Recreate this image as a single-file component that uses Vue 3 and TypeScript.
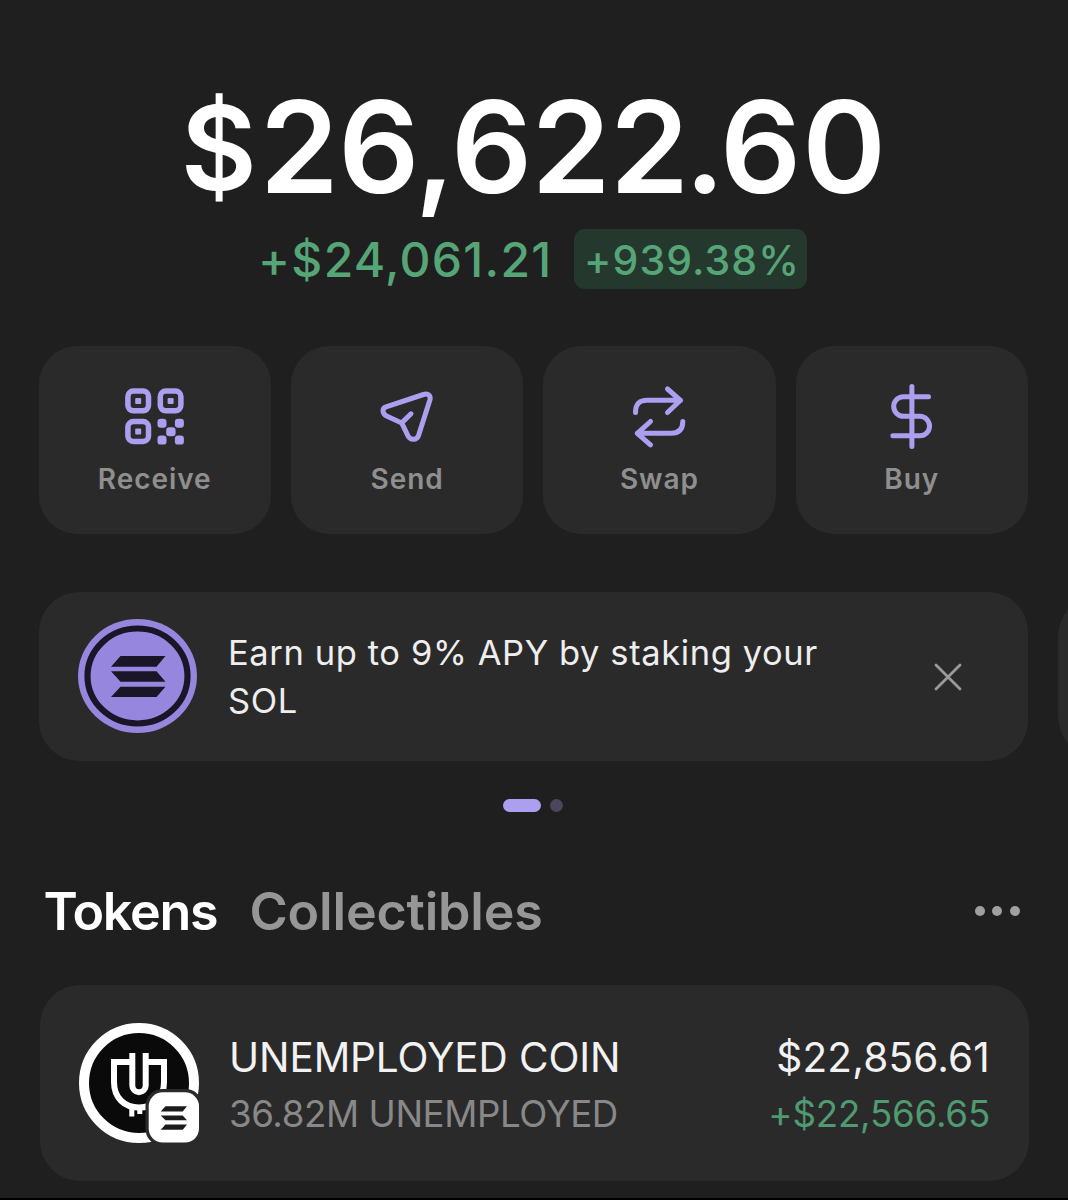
<script setup lang="ts">
type ActionIcon = 'receive' | 'send' | 'swap' | 'buy'

interface Action {
  id: ActionIcon
  label: string
}

interface Token {
  name: string
  amount: string
  value: string
  change: string
}

const balance = { currency: '$', whole: '26,622', tenths: '.6', hundredths: '0' }
const change = '+$24,061.21'
const changePercent = '+939.38%'

const actions: Action[] = [
  { id: 'receive', label: 'Receive' },
  { id: 'send', label: 'Send' },
  { id: 'swap', label: 'Swap' },
  { id: 'buy', label: 'Buy' },
]

const tokens: Token[] = [
  { name: 'UNEMPLOYED COIN', amount: '36.82M UNEMPLOYED', value: '$22,856.61', change: '+$22,566.65' },
]
</script>

<template>
  <main class="wallet">
    <header class="summary">
      <h1 class="balance"><span class="currency">{{ balance.currency }}</span><span>{{ balance.whole }}</span><span class="tenths">{{ balance.tenths }}</span><span>{{ balance.hundredths }}</span></h1>
      <div class="delta">
        <span class="delta-amount">{{ change }}</span>
        <span class="delta-percent">{{ changePercent }}</span>
      </div>
    </header>

    <nav class="actions">
      <button v-for="action in actions" :key="action.id" class="action" type="button">
        <svg v-if="action.id === 'receive'" class="action-icon" viewBox="0 0 64 66">
          <g class="line qr">
            <rect x="4.9" y="7" width="20.6" height="19.8" rx="5.5" />
            <rect x="37.3" y="7" width="20.6" height="19.8" rx="5.5" />
            <rect x="4.9" y="37.6" width="20.6" height="19.8" rx="5.5" />
          </g>
          <g class="solid">
            <rect x="12.2" y="14" width="6" height="6" rx="1" />
            <rect x="44.6" y="14" width="6" height="6" rx="1" />
            <rect x="12.2" y="44.6" width="6" height="6" rx="1" />
            <rect x="34.5" y="34.8" width="9" height="9" rx="3.2" />
            <rect x="51.9" y="34.8" width="9" height="9" rx="3.2" />
            <rect x="43.2" y="43.2" width="9.4" height="9" rx="3.2" />
            <rect x="34.5" y="51.6" width="9" height="9" rx="3.2" />
            <rect x="51.9" y="51.6" width="9" height="9" rx="3.2" />
          </g>
        </svg>
        <svg v-else-if="action.id === 'send'" class="action-icon" viewBox="0 0 64 66">
          <path
            class="line"
            d="M11 22.8 L48.5 10.5 C53.3 9 56.2 11.5 54.8 16.3 L43.6 51.3 C41.8 56.3 35.4 56.6 33 51.8 L26.7 38.9 L11.6 32 C7 29.7 6.8 24.3 11 22.8 Z M26.7 38.9 L36 29.8"
          />
        </svg>
        <svg v-else-if="action.id === 'swap'" class="action-icon" viewBox="0 0 64 66">
          <path
            class="line"
            d="M8.5 28.5 C8.5 20 12.3 16.3 20.3 16.3 H53.5 M40.5 5 L53.5 16.3 L40.5 28.5 M55.8 37.5 C55.8 45.5 52 49.3 44 49.3 H10.3 M23.5 37.5 L10.3 49.3 L23.5 60.8"
          />
        </svg>
        <svg v-else class="action-icon" viewBox="0 0 64 66">
          <path
            class="line"
            d="M31.9 2.5 V62.5 M48.5 12.7 H23.5 A9.8 9.8 0 0 0 23.5 32.3 H39.8 A9.75 9.75 0 0 1 39.8 51.8 H12.9"
          />
        </svg>
        <span class="action-label">{{ action.label }}</span>
      </button>
    </nav>

    <section class="carousel">
      <article class="banner">
        <svg class="banner-logo" viewBox="0 0 120 116">
          <ellipse cx="60.5" cy="58" rx="59.5" ry="57" fill="#9786dd" />
          <ellipse cx="60.5" cy="58" rx="50" ry="47.5" fill="none" stroke="#1a1627" stroke-width="6.2" />
          <path
            fill="#1a1627"
            d="M43.5 38 H88.5 L79.5 48.7 H34 Z M34 53.3 H79.5 L88.5 63.7 H43.5 Z M43.5 68.7 H88.5 L79.5 79 H34 Z"
          />
        </svg>
        <p class="banner-text">Earn up to 9% APY by staking your<br />SOL</p>
        <svg class="close" viewBox="0 0 28 28">
          <path d="M2 2 L26 26 M26 2 L2 26" />
        </svg>
      </article>
      <article class="banner-next"></article>
    </section>

    <div class="pager">
      <span class="page current"></span>
      <span class="page"></span>
    </div>

    <div class="tabs">
      <h2 class="tab tab-tokens">Tokens</h2>
      <h2 class="tab tab-collectibles">Collectibles</h2>
      <div class="more"><i></i><i></i><i></i></div>
    </div>

    <article v-for="token in tokens" :key="token.name" class="token">
      <svg class="token-logo" viewBox="0 0 122 122">
        <circle cx="61" cy="60" r="55" fill="#0a0a0a" stroke="#fff" stroke-width="10" />
        <g fill="none" stroke="#fff" stroke-width="6">
          <path d="M53 39 H36 V59 C36 75 46.5 84.5 61 84.5 C75.5 84.5 86 75 86 59 V39 H69" />
          <path d="M54.3 30 V62.5 A6.7 6.7 0 0 0 67.7 62.5 V30" />
          <path d="M53.8 84 V93.5 M61.8 84 V91" stroke-width="5" />
        </g>
        <rect x="67.5" y="66" width="57" height="57" rx="17" fill="#2a2a2a" />
        <rect x="70.7" y="69.3" width="50.3" height="50.2" rx="14" fill="#fff" />
        <path
          fill="#1c1c1c"
          d="M87.5 83.2 H109 L104.7 88.5 H82.7 Z M82.7 92.4 H104.7 L109 97.3 H87.5 Z M87.5 101.6 H109 L104.7 106.8 H82.7 Z"
        />
      </svg>
      <div class="token-info">
        <div class="token-name">{{ token.name }}</div>
        <div class="token-amount">{{ token.amount }}</div>
      </div>
      <div class="token-worth">
        <div class="token-value">{{ token.value }}</div>
        <div class="token-change">{{ token.change }}</div>
      </div>
    </article>
  </main>
</template>

<style>
body {
  margin: 0;
  background: #1f1f1f;
}
</style>

<style scoped>
.wallet {
  box-sizing: border-box;
  width: 1068px;
  height: 1200px;
  overflow: hidden;
  padding-top: 77px;
  border-bottom: 2px solid #000;
  background: #1f1f1f;
  font-family: Inter, "Liberation Sans", sans-serif;
  color: #fff;
}

.summary {
  display: flex;
  flex-direction: column;
  align-items: center;
}

.balance {
  display: flex;
  margin: 0 2px 0 0;
  font-size: 127px;
  font-weight: 600;
  line-height: 141px;
  letter-spacing: -0.7px;
}

.currency {
  width: 79px;
  font-size: 117px;
}

.tenths {
  margin: 0 2.5px 0 -4px;
  letter-spacing: -1.5px;
}

.delta {
  display: flex;
  align-items: center;
  gap: 21.5px;
  height: 60px;
  margin: 11px 3px 0 0;
  color: #56a577;
  font-weight: 500;
}

.delta-amount {
  padding-top: 1px;
  font-size: 48px;
  line-height: 60px;
  letter-spacing: 1.3px;
}

.delta-percent {
  box-sizing: border-box;
  width: 233px;
  height: 60px;
  padding: 1px 0 0 10px;
  border-radius: 11px;
  background: #24382d;
  font-size: 41px;
  line-height: 60px;
  letter-spacing: 1.1px;
}

.actions {
  display: flex;
  gap: 20px;
  margin: 57px 40px 0 38.5px;
}

.action {
  display: flex;
  flex: 1;
  flex-direction: column;
  align-items: center;
  height: 188px;
  padding: 38px 0 0;
  border: 0;
  border-radius: 38px;
  background: #2a2a2a;
  font-family: inherit;
}

.action-icon {
  width: 64px;
  height: 66px;
}

.line {
  fill: none;
  stroke: #ad9ff0;
  stroke-width: 5px;
  stroke-linecap: round;
  stroke-linejoin: round;
}

.line.qr {
  stroke-width: 5.5px;
}

.solid {
  fill: #ad9ff0;
}

.action-label {
  margin-top: 9.5px;
  color: #8f8f8f;
  font-size: 28px;
  font-weight: 600;
  line-height: 38px;
  letter-spacing: 0.95px;
}

.carousel {
  display: flex;
  gap: 30px;
  margin: 58px 0 0 38.5px;
}

.banner {
  display: flex;
  flex: none;
  align-items: center;
  width: 989.5px;
  height: 169px;
  border-radius: 40px;
  background: #2a2a2a;
}

.banner-logo {
  width: 120px;
  height: 116px;
  margin: -1px 0 0 38.5px;
}

.banner-text {
  flex: 1;
  margin: 0 0 0 31px;
  color: #eee;
  font-size: 34.5px;
  line-height: 48px;
  letter-spacing: 0.6px;
}

.close {
  width: 28px;
  height: 28px;
  margin-right: 66px;
  fill: none;
  stroke: #9a9a9a;
  stroke-width: 2.8px;
  stroke-linecap: round;
}

.banner-next {
  flex: none;
  width: 989px;
  height: 169px;
  border-radius: 46px;
  background: #2a2a2a;
}

.pager {
  display: flex;
  justify-content: center;
  gap: 9px;
  margin: 38px 3px 0 0;
}

.page {
  width: 13px;
  height: 12.5px;
  border-radius: 7px;
  background: #4b465d;
}

.page.current {
  width: 38px;
  background: #ad9ff0;
}

.tabs {
  display: flex;
  align-items: center;
  height: 64px;
  margin: 68.5px 48.5px 0 43.5px;
}

.tab {
  margin: 0;
  font-size: 52px;
  font-weight: 600;
  line-height: 64px;
}

.tab-tokens {
  width: 206px;
  letter-spacing: -1.29px;
}

.tab-collectibles {
  color: #969696;
  letter-spacing: -0.2px;
}

.more {
  display: flex;
  gap: 7.5px;
  margin: -2px 0 0 auto;
}

.more i {
  width: 10px;
  height: 10px;
  border-radius: 50%;
  background: #a0a0a0;
}

.token {
  display: flex;
  box-sizing: border-box;
  height: 196px;
  margin: 41px 39px 0 39.5px;
  padding: 38px 39px 0 38.5px;
  border-radius: 40px;
  background: #2a2a2a;
}

.token-logo {
  width: 122px;
  height: 122px;
  flex: none;
}

.token-info {
  padding: 7px 0 0 29px;
}

.token-worth {
  margin-left: auto;
  padding-top: 7px;
  text-align: right;
}

.token-name,
.token-value {
  color: #f2f2f2;
  font-size: 40.5px;
  line-height: 56px;
}

.token-name {
  letter-spacing: -0.12px;
}

.token-value {
  letter-spacing: 0.2px;
}

.token-amount,
.token-change {
  font-size: 36.7px;
  line-height: 56px;
}

.token-amount {
  color: #888;
  letter-spacing: -0.42px;
}

.token-change {
  color: #4f9a70;
  letter-spacing: -0.2px;
}
</style>
